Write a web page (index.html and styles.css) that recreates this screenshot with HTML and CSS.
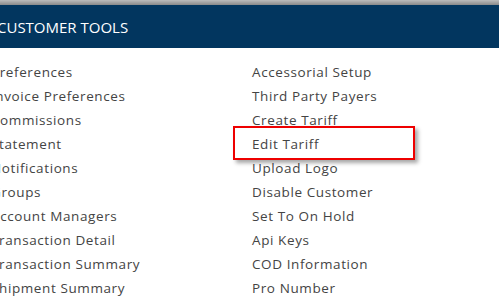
FILE: index.html
```html
<!DOCTYPE html>
<html lang="en">
<head>
  <meta charset="UTF-8" />
  <title>Customer Tools</title>
  <link rel="stylesheet" href="styles.css">
</head>
<body>
  <div class="topline"></div>
  <div class="panel">
    <div class="panel-head">CUSTOMER TOOLS</div>
    <div class="tools">
      <ul class="tool-col">
        <li>Preferences</li>
        <li>Invoice Preferences</li>
        <li>Commissions</li>
        <li>Statement</li>
        <li>Notifications</li>
        <li>Groups</li>
        <li>Account Managers</li>
        <li>Transaction Detail</li>
        <li>Transaction Summary</li>
        <li>Shipment Summary</li>
        <li>Audit Log</li>
      </ul>
      <ul class="tool-col">
        <li>Accessorial Setup</li>
        <li>Third Party Payers</li>
        <li>Create Tariff</li>
        <li class="marked">Edit Tariff</li>
        <li>Upload Logo</li>
        <li>Disable Customer</li>
        <li>Set To On Hold</li>
        <li>Api Keys</li>
        <li>COD Information</li>
        <li>Pro Number</li>
        <li>Address Book</li>
      </ul>
    </div>
  </div>
</body>
</html>
```

FILE: styles.css
```css
body {
  margin: 0;
  background: #fff;
  font-family: "Open Sans", "Noto Sans", Arial, sans-serif;
  overflow: hidden;
}

.topline {
  height: 5px;
  background: linear-gradient(#bcbcbc, #8a8a8a);
}

.panel {
  margin-left: -10px;
}

.panel-head {
  height: 43px;
  line-height: 44px;
  padding-left: 7px;
  background: #02365f;
  color: #fff;
  font-size: 15px;
}

.tools {
  display: grid;
  grid-template-columns: 260px 1fr;
  padding: 12px 0 0 1px;
}

.tool-col {
  list-style: none;
  margin: 0;
  padding: 0;
}

.tool-col li {
  height: 24px;
  line-height: 24px;
  font-size: 13.5px;
  letter-spacing: 0.6px;
  color: #444;
  white-space: nowrap;
}

.tools .tool-col + .tool-col {
  padding-left: 1px;
}

.marked {
  position: relative;
}

.marked::after {
  content: "";
  position: absolute;
  left: -19px;
  top: -6px;
  width: 178px;
  height: 30px;
  border: 2.5px solid #ee0000;
  box-shadow: 3px 3px 4px rgba(0, 0, 0, 0.35);
}
```
